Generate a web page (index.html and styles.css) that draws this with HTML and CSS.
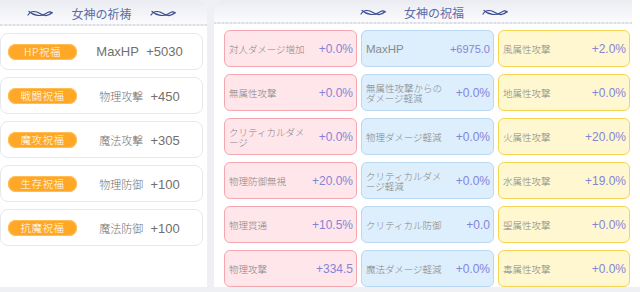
FILE: index.html
```html
<!DOCTYPE html>
<html lang="ja">
<head>
<meta charset="utf-8">
<link rel="stylesheet" href="styles.css">
</head>
<body>
<div class="wrap">
  <section class="panel left">
    <header class="head">
      <svg class="swoosh" viewBox="0 0 26 9"><path d="M1 6C4 1.5 9 2 13 4.5S21 8 25 3.5"/><path d="M2 2.5C7 7 14 7.5 18 5S23 2 25 4"/></svg>
      <span class="title">女神の祈祷</span>
      <svg class="swoosh" viewBox="0 0 26 9"><path d="M1 6C4 1.5 9 2 13 4.5S21 8 25 3.5"/><path d="M2 2.5C7 7 14 7.5 18 5S23 2 25 4"/></svg>
    </header>
    <div class="cards">
      <div class="card"><span class="pill">HP祝福</span><span class="stat">MaxHP&nbsp; +5030</span></div>
      <div class="card"><span class="pill">戦闘祝福</span><span class="stat"><span class="jp">物理攻撃</span>&nbsp; +450</span></div>
      <div class="card"><span class="pill">魔攻祝福</span><span class="stat"><span class="jp">魔法攻撃</span>&nbsp; +305</span></div>
      <div class="card"><span class="pill">生存祝福</span><span class="stat"><span class="jp">物理防御</span>&nbsp; +100</span></div>
      <div class="card"><span class="pill">抗魔祝福</span><span class="stat"><span class="jp">魔法防御</span>&nbsp; +100</span></div>
    </div>
  </section>
  <section class="panel right">
    <header class="head">
      <svg class="swoosh" viewBox="0 0 26 9"><path d="M1 6C4 1.5 9 2 13 4.5S21 8 25 3.5"/><path d="M2 2.5C7 7 14 7.5 18 5S23 2 25 4"/></svg>
      <span class="title">女神の祝福</span>
      <svg class="swoosh" viewBox="0 0 26 9"><path d="M1 6C4 1.5 9 2 13 4.5S21 8 25 3.5"/><path d="M2 2.5C7 7 14 7.5 18 5S23 2 25 4"/></svg>
    </header>
    <div class="grid">
      <div class="cell red"><span class="lbl">対人ダメージ増加</span><span class="val">+0.0%</span></div>
      <div class="cell blue"><span class="lbl latin">MaxHP</span><span class="val small">+6975.0</span></div>
      <div class="cell yellow"><span class="lbl">風属性攻撃</span><span class="val">+2.0%</span></div>

      <div class="cell red"><span class="lbl">無属性攻撃</span><span class="val">+0.0%</span></div>
      <div class="cell blue"><span class="lbl">無属性攻撃からのダメージ軽減</span><span class="val">+0.0%</span></div>
      <div class="cell yellow"><span class="lbl">地属性攻撃</span><span class="val">+0.0%</span></div>

      <div class="cell red"><span class="lbl">クリティカルダメージ</span><span class="val">+0.0%</span></div>
      <div class="cell blue"><span class="lbl">物理ダメージ軽減</span><span class="val">+0.0%</span></div>
      <div class="cell yellow"><span class="lbl">火属性攻撃</span><span class="val">+20.0%</span></div>

      <div class="cell red"><span class="lbl">物理防御無視</span><span class="val">+20.0%</span></div>
      <div class="cell blue"><span class="lbl">クリティカルダメージ軽減</span><span class="val">+0.0%</span></div>
      <div class="cell yellow"><span class="lbl">水属性攻撃</span><span class="val">+19.0%</span></div>

      <div class="cell red"><span class="lbl">物理貫通</span><span class="val">+10.5%</span></div>
      <div class="cell blue"><span class="lbl">クリティカル防御</span><span class="val">+0.0</span></div>
      <div class="cell yellow"><span class="lbl">聖属性攻撃</span><span class="val">+0.0%</span></div>

      <div class="cell red"><span class="lbl">物理攻撃</span><span class="val">+334.5</span></div>
      <div class="cell blue"><span class="lbl">魔法ダメージ軽減</span><span class="val">+0.0%</span></div>
      <div class="cell yellow"><span class="lbl">毒属性攻撃</span><span class="val">+0.0%</span></div>
    </div>
  </section>
</div>
</body>
</html>
```

FILE: styles.css
```css
html, body {
  margin: 0;
  padding: 0;
}
body {
  width: 640px;
  height: 292px;
  overflow: hidden;
  background: #eff0f4;
  font-family: "Liberation Sans", "Noto Sans CJK JP", sans-serif;
}
.wrap {
  display: flex;
  gap: 7px;
  height: 287px;
}
.panel {
  background: #ffffff;
  display: flex;
  flex-direction: column;
}
.left {
  width: 207px;
  border-radius: 0 8px 0 0;
}
.right {
  flex: 1;
  border-radius: 8px 0 0 0;
}
.head {
  box-sizing: border-box;
  height: 26px;
  display: flex;
  align-items: center;
  justify-content: center;
  gap: 18px;
  padding-top: 2px;
  background: linear-gradient(#eaecf2, #fbfbfd);
  border-bottom: 2px dotted #dcdee5;
}
.left .head {
  border-radius: 0 8px 0 0;
  padding-right: 4px;
}
.right .head {
  border-radius: 8px 0 0 0;
  margin: 0 8px 0 0;
  padding-left: 22px;
}
.title {
  font-family: "Noto Sans CJK JP", sans-serif;
  font-size: 12px;
  color: #5d6ca6;
}
.swoosh {
  width: 26px;
  height: 9px;
  fill: none;
  stroke: #3c4c92;
  stroke-width: 1.2;
  stroke-linecap: round;
}
.cards {
  display: flex;
  flex-direction: column;
  gap: 7px;
  padding: 7px 4px 0 0;
}
.card {
  height: 35px;
  border: 1px solid #e7e8eb;
  border-radius: 8px;
  display: flex;
  align-items: center;
  padding-left: 7px;
}
.pill {
  width: 69px;
  height: 16px;
  border-radius: 8px;
  background: #ffa726;
  box-shadow: inset 0 0 0 1px #ffbe55;
  color: #fff;
  font-family: "Noto Sans CJK JP", sans-serif;
  font-size: 10.5px;
  font-weight: 300;
  line-height: 16px;
  text-align: center;
  letter-spacing: 0.5px;
}
.stat {
  flex: 1;
  text-align: center;
  font-family: "Liberation Sans", "Noto Sans CJK JP", sans-serif;
  font-size: 13px;
  color: #707070;
}
.jp {
  font-family: "Noto Sans CJK JP", sans-serif;
  font-size: 11px;
  font-weight: 300;
}
.grid {
  display: grid;
  grid-template-columns: 133px 133px 132px;
  grid-auto-rows: 37px;
  column-gap: 4px;
  row-gap: 7px;
  padding: 6px 0 0 10px;
}
.cell {
  box-sizing: border-box;
  border: 1.5px solid;
  border-radius: 6px;
  display: flex;
  align-items: center;
  justify-content: space-between;
  padding: 0 3px 0 4px;
}
.red {
  background: #ffe6ea;
  border-color: #f4a7ae;
}
.blue {
  background: #ddeefd;
  border-color: #b9d8f4;
}
.yellow {
  background: #fff7cf;
  border-color: #f6d653;
}
.lbl {
  font-family: "Noto Sans CJK JP", sans-serif;
  font-size: 9.5px;
  font-weight: 300;
  line-height: 10px;
  color: #858585;
  max-width: 78px;
}
.lbl.latin {
  font-family: "Liberation Sans", sans-serif;
  font-size: 11.5px;
  font-weight: 400;
  color: #8a8a8a;
}
.val {
  font-family: "Liberation Sans", sans-serif;
  font-size: 12px;
  color: #8585d8;
  white-space: nowrap;
}
.val.small {
  font-size: 11px;
}
```
